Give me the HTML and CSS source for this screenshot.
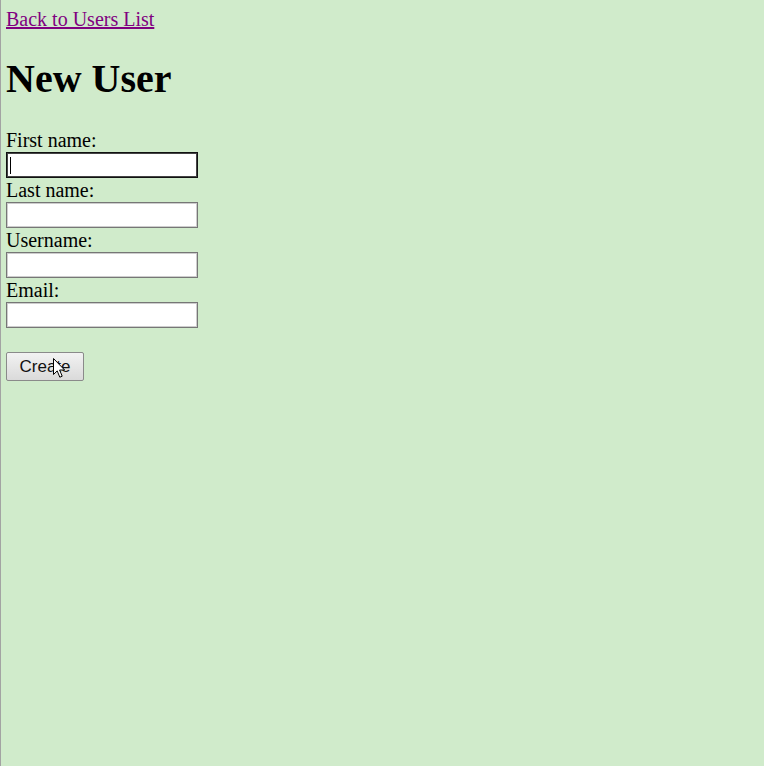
FILE: index.html
```html
<!DOCTYPE html>
<html>
<head>
<meta charset="utf-8">
<title>New User</title>
<link rel="stylesheet" href="styles.css">
</head>
<body>
<a class="back" href="#">Back to Users List</a>
<h1 class="title">New User</h1>
<form class="user-form">
First name:<br>
<input class="field field-focused" type="text"><br>
Last name:<br>
<input class="field" type="text"><br>
Username:<br>
<input class="field" type="text"><br>
Email:<br>
<input class="field" type="text"><br>
<br>
<span class="btn-wrap"><button class="btn" type="button">Create</button><svg class="pointer" width="13" height="21" viewBox="0 0 13 21"><path d="M0.5 0.5 L0.5 16.5 L4.2 12.9 L6.8 19.2 L9.2 18.2 L6.6 12 L11.6 12 Z" fill="#fff" stroke="#000" stroke-width="1" stroke-linejoin="miter"/></svg></span>
</form>
</body>
</html>
```

FILE: styles.css
```css
html {
  background: #d0ebcb;
  border-left: 1px solid #a3a3a3;
  min-height: 100%;
}
body {
  margin: 8px 5px 6px;
  font-family: "Liberation Serif", "Times New Roman", serif;
  font-size: 20px;
  color: #000;
}
.back {
  color: #800080;
}
.title {
  font-size: 40px;
  font-weight: bold;
  margin: 24px 0 27px;
}
.user-form {
  margin: 0;
}
.field {
  box-sizing: border-box;
  width: 192px;
  height: 26px;
  margin: 0 0 1px;
  padding: 0 3px;
  border: 1px solid #767676;
  box-shadow: inset 0 0 0 1px #cdcdcd;
  background: #fff;
  font-family: "Liberation Sans", Arial, sans-serif;
  font-size: 16px;
  vertical-align: baseline;
  outline: none;
}
.field-focused {
  border-color: #111;
  box-shadow: inset 0 0 0 1px #444;
  background: linear-gradient(#000, #000) no-repeat 3px 4px / 1px 17px, #fff;
  background-origin: padding-box;
}
.btn-wrap {
  position: relative;
  display: inline-block;
}
.btn {
  box-sizing: border-box;
  width: 78px;
  height: 29px;
  margin: 0;
  padding: 0;
  border: 1px solid #8a8a8a;
  border-radius: 2px;
  background: linear-gradient(#f2f2f2, #dadada);
  font-family: "Liberation Sans", Arial, sans-serif;
  font-size: 17px;
  color: #111;
}
.pointer {
  position: absolute;
  left: 47px;
  top: 6px;
}
```
